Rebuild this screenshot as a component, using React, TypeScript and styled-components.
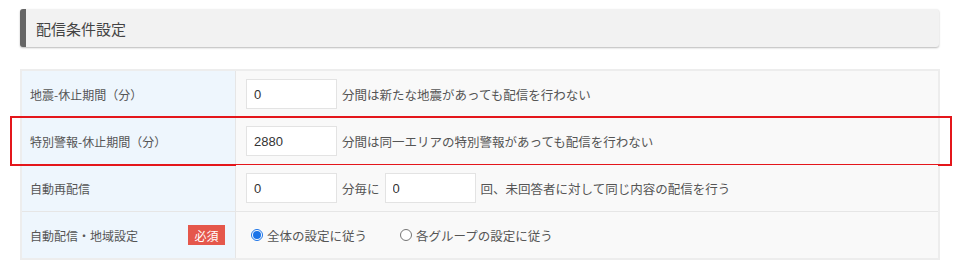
import React, { useState } from 'react';
import styled, { createGlobalStyle } from 'styled-components';

const GlobalStyle = createGlobalStyle`
  body {
    margin: 0;
    background: #fff;
    font-family: "Noto Sans CJK JP", "Noto Sans", sans-serif;
    color: #555;
  }
`;

const Page = styled.div`
  padding: 9px 20px 0 20px;
`;

const SectionHeader = styled.div`
  height: 38px;
  display: flex;
  align-items: center;
  padding-left: 10px;
  background: #f2f2f2;
  border-left: 6px solid #666;
  border-radius: 3px;
  box-shadow: 0 1px 2px rgba(0, 0, 0, 0.28);
  font-size: 15px;
  color: #444;
  margin-right: 1px;
`;

const Table = styled.div`
  margin-top: 22px;
  display: grid;
  grid-template-columns: 214px 1fr;
  border: 2px solid #ededed;
`;

const Row = styled.div`
  display: contents;
`;

const LabelCell = styled.div<{ $last?: boolean }>`
  display: flex;
  align-items: center;
  justify-content: space-between;
  height: 46px;
  padding: 0 10px 0 8px;
  background: #eef6fd;
  border-right: 1px solid #e6e6e6;
  border-bottom: ${(p) => (p.$last ? 'none' : '1px solid #e6e6e6')};
  font-size: 12px;
  color: #555;
`;

const ValueCell = styled.div<{ $last?: boolean }>`
  position: relative;
  display: flex;
  align-items: center;
  gap: 5px;
  height: 46px;
  padding: 0 10px;
  background: #f9f9f9;
  border-bottom: ${(p) => (p.$last ? 'none' : '1px solid #e6e6e6')};
  font-size: 12.5px;
  color: #555;
`;

const Highlight = styled.div`
  position: absolute;
  top: -2px;
  bottom: -2px;
  left: -226px;
  right: -14px;
  border: 2px solid #e4161b;
  pointer-events: none;
`;

const NumberInput = styled.input`
  box-sizing: border-box;
  width: 91px;
  height: 30px;
  padding: 0 7px;
  border: 1px solid #e3e3e3;
  background: #fff;
  font-family: "Liberation Sans", Arial, sans-serif;
  font-size: 13px;
  color: #333;
  outline: none;
`;

const Badge = styled.span`
  display: inline-flex;
  align-items: center;
  justify-content: center;
  width: 37px;
  height: 20px;
  background: #e5574b;
  color: #fff;
  font-size: 12px;
`;

const RadioGroup = styled.div`
  display: flex;
  align-items: center;
  gap: 33px;
  padding-left: 5px;
`;

const RadioLabel = styled.label`
  display: flex;
  align-items: center;
  gap: 4px;
  cursor: pointer;
`;

const RadioMark = styled.span<{ $checked: boolean }>`
  box-sizing: border-box;
  width: 12px;
  height: 12px;
  border-radius: 50%;
  border: ${(p) => (p.$checked ? '1px solid #1a73e8' : '1px solid #757575')};
  background: #fff;
  display: flex;
  align-items: center;
  justify-content: center;

  &::after {
    content: '';
    width: 8px;
    height: 8px;
    border-radius: 50%;
    background: ${(p) => (p.$checked ? '#1a73e8' : 'transparent')};
  }
`;

export default function App() {
  const [mode, setMode] = useState<'all' | 'group'>('all');

  return (
    <Page>
      <GlobalStyle />
      <SectionHeader>配信条件設定</SectionHeader>
      <Table>
        <Row>
          <LabelCell>地震-休止期間（分）</LabelCell>
          <ValueCell>
            <NumberInput defaultValue="0" />
            <span>分間は新たな地震があっても配信を行わない</span>
          </ValueCell>
        </Row>
        <Row>
          <LabelCell>特別警報-休止期間（分）</LabelCell>
          <ValueCell>
            <NumberInput defaultValue="2880" />
            <span>分間は同一エリアの特別警報があっても配信を行わない</span>
            <Highlight />
          </ValueCell>
        </Row>
        <Row>
          <LabelCell>自動再配信</LabelCell>
          <ValueCell>
            <NumberInput defaultValue="0" />
            <span>分毎に</span>
            <NumberInput defaultValue="0" />
            <span>回、未回答者に対して同じ内容の配信を行う</span>
          </ValueCell>
        </Row>
        <Row>
          <LabelCell $last>
            <span>自動配信・地域設定</span>
            <Badge>必須</Badge>
          </LabelCell>
          <ValueCell $last>
            <RadioGroup>
              <RadioLabel onClick={() => setMode('all')}>
                <RadioMark $checked={mode === 'all'} />
                全体の設定に従う
              </RadioLabel>
              <RadioLabel onClick={() => setMode('group')}>
                <RadioMark $checked={mode === 'group'} />
                各グループの設定に従う
              </RadioLabel>
            </RadioGroup>
          </ValueCell>
        </Row>
      </Table>
    </Page>
  );
}
